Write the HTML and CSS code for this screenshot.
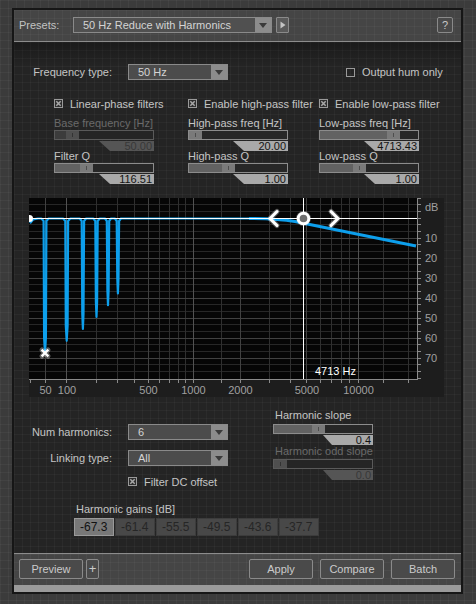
FILE: index.html
```html
<!DOCTYPE html>
<html>
<head>
<meta charset="utf-8">
<link rel="stylesheet" href="styles.css">
</head>
<body>
<div class="panel">
  <div class="presets-bar">
    <span class="presets-lbl">Presets:</span>
    <div class="dd preset-dd"><span class="dd-text">50 Hz Reduce with Harmonics</span><span class="dd-btn"><svg width="8" height="5" viewBox="0 0 8 5"><path d="M0 0H8L4 5Z" fill="#3a3a3a"/></svg></span></div>
    <div class="play-btn"><svg width="6" height="8" viewBox="0 0 6 8"><path d="M0.5 0.5L5.5 4L0.5 7.5Z" fill="#c4c4c4"/></svg></div>
    <div class="help-btn">?</div>
  </div>

  <div class="main">
    <div class="freq-row">
      <span class="row-lbl">Frequency type:</span>
      <div class="dd w100"><span class="dd-text">50 Hz</span><span class="dd-btn"><svg width="8" height="5" viewBox="0 0 8 5"><path d="M0 0H8L4 5Z" fill="#3a3a3a"/></svg></span></div>
      <div class="check hum"><svg class="cb" width="9" height="9" viewBox="0 0 9 9"><rect x="0.5" y="0.5" width="8" height="8" fill="none" stroke="#9a9a9a"/></svg>Output hum only</div>
    </div>

    <div class="filters">
      <div class="fcol">
        <div class="check"><svg class="cb" width="9" height="9" viewBox="0 0 9 9"><rect x="0.5" y="0.5" width="8" height="8" fill="#2e2e2e" stroke="#9a9a9a"/><path d="M2.3 2.3L6.7 6.7M6.7 2.3L2.3 6.7" stroke="#a8a8a8" stroke-width="1.5"/></svg>Linear-phase filters</div>
        <div class="slabel disabled">Base frequency [Hz]</div>
        <div class="slider disabled"><span class="fill" style="width:11px"></span><span class="thumb"></span></div>
        <div class="value disabled">50.00</div>
        <div class="slabel s2">Filter Q</div>
        <div class="slider"><span class="fill" style="width:25px"></span><span class="thumb"></span></div>
        <div class="value">116.51</div>
      </div>
      <div class="fcol">
        <div class="check"><svg class="cb" width="9" height="9" viewBox="0 0 9 9"><rect x="0.5" y="0.5" width="8" height="8" fill="#2e2e2e" stroke="#9a9a9a"/><path d="M2.3 2.3L6.7 6.7M6.7 2.3L2.3 6.7" stroke="#a8a8a8" stroke-width="1.5"/></svg>Enable high-pass filter</div>
        <div class="slabel">High-pass freq [Hz]</div>
        <div class="slider"><span class="fill" style="width:0px"></span><span class="thumb"></span></div>
        <div class="value">20.00</div>
        <div class="slabel s2">High-pass Q</div>
        <div class="slider"><span class="fill" style="width:33px"></span><span class="thumb"></span></div>
        <div class="value">1.00</div>
      </div>
      <div class="fcol">
        <div class="check"><svg class="cb" width="9" height="9" viewBox="0 0 9 9"><rect x="0.5" y="0.5" width="8" height="8" fill="#2e2e2e" stroke="#9a9a9a"/><path d="M2.3 2.3L6.7 6.7M6.7 2.3L2.3 6.7" stroke="#a8a8a8" stroke-width="1.5"/></svg>Enable low-pass filter</div>
        <div class="slabel">Low-pass freq [Hz]</div>
        <div class="slider"><span class="fill" style="width:67px"></span><span class="thumb"></span></div>
        <div class="value">4713.43</div>
        <div class="slabel s2">Low-pass Q</div>
        <div class="slider"><span class="fill" style="width:33px"></span><span class="thumb"></span></div>
        <div class="value">1.00</div>
      </div>
    </div>

    <div class="graph">
      <svg width="415" height="199" viewBox="0 0 415 199" font-family="Liberation Sans, Arial, sans-serif" font-size="11">
        <rect x="0" y="0" width="415" height="199" fill="#1d1d1d"/>
        <rect x="0" y="0" width="388" height="181" fill="#060606"/>
        <g fill="#272727">
          <rect x="0" y="6" width="388" height="1"/><rect x="0" y="13" width="388" height="1"/>
          <rect x="0" y="26" width="388" height="1"/><rect x="0" y="33" width="388" height="1"/>
          <rect x="0" y="46" width="388" height="1"/><rect x="0" y="53" width="388" height="1"/>
          <rect x="0" y="66" width="388" height="1"/><rect x="0" y="73" width="388" height="1"/>
          <rect x="0" y="86" width="388" height="1"/><rect x="0" y="93" width="388" height="1"/>
          <rect x="0" y="106" width="388" height="1"/><rect x="0" y="113" width="388" height="1"/>
          <rect x="0" y="126" width="388" height="1"/><rect x="0" y="133" width="388" height="1"/>
          <rect x="0" y="146" width="388" height="1"/><rect x="0" y="153" width="388" height="1"/>
          <rect x="0" y="166" width="388" height="1"/><rect x="0" y="173" width="388" height="1"/>
        </g>
        <g fill="#2f2f2f">
          <rect x="67" y="0" width="1" height="181"/><rect x="88" y="0" width="1" height="181"/>
          <rect x="105" y="0" width="1" height="181"/><rect x="130" y="0" width="1" height="181"/>
          <rect x="140" y="0" width="1" height="181"/><rect x="149" y="0" width="1" height="181"/>
          <rect x="156" y="0" width="1" height="181"/><rect x="192" y="0" width="1" height="181"/>
          <rect x="240" y="0" width="1" height="181"/><rect x="261" y="0" width="1" height="181"/>
          <rect x="291" y="0" width="1" height="181"/><rect x="302" y="0" width="1" height="181"/>
          <rect x="312" y="0" width="1" height="181"/><rect x="320" y="0" width="1" height="181"/>
          <rect x="354" y="0" width="1" height="181"/><rect x="379" y="0" width="1" height="181"/>
        </g>
        <g fill="#414141">
          <rect x="0" y="40" width="388" height="1"/><rect x="0" y="60" width="388" height="1"/>
          <rect x="0" y="80" width="388" height="1"/><rect x="0" y="100" width="388" height="1"/>
          <rect x="0" y="120" width="388" height="1"/><rect x="0" y="140" width="388" height="1"/>
          <rect x="0" y="160" width="388" height="1"/>
          <rect x="16" y="0" width="1" height="181"/><rect x="119" y="0" width="1" height="181"/>
          <rect x="211" y="0" width="1" height="181"/><rect x="277" y="0" width="1" height="181"/>
        </g>
        <g fill="#525252">
          <rect x="37" y="0" width="1" height="181"/><rect x="164" y="0" width="1" height="181"/>
          <rect x="329" y="0" width="1" height="181"/>
        </g>
        <!-- axes -->
        <g fill="#8a8a8a">
          <rect x="0" y="181" width="389" height="1"/>
          <rect x="388" y="0" width="1" height="182"/>
        </g>
        <g stroke="#8a8a8a" stroke-width="1">
          <path d="M1.5 181V185M16.5 181V185M37.5 181V185M67.5 181V185M88.5 181V185M105.5 181V185M119.5 181V185M130.5 181V185M140.5 181V185M149.5 181V185M156.5 181V185M164.5 181V185M192.5 181V185M211.5 181V185M240.5 181V185M261.5 181V185M277.5 181V185M291.5 181V185M302.5 181V185M312.5 181V185M320.5 181V185M329.5 181V185M354.5 181V185M379.5 181V185"/>
          <path d="M388 0.5H392M388 6.5H392M388 13.5H392M388 20.5H392M388 26.5H392M388 33.5H392M388 40.5H392M388 46.5H392M388 53.5H392M388 60.5H392M388 66.5H392M388 73.5H392M388 80.5H392M388 86.5H392M388 93.5H392M388 100.5H392M388 106.5H392M388 113.5H392M388 120.5H392M388 126.5H392M388 133.5H392M388 140.5H392M388 146.5H392M388 153.5H392M388 160.5H392M388 166.5H392M388 173.5H392M388 180.5H392"/>
        </g>
        <g fill="#a0a0a0">
          <text x="396" y="13">dB</text>
          <text x="396" y="44">10</text>
          <text x="396" y="64">20</text>
          <text x="396" y="84">30</text>
          <text x="396" y="104">40</text>
          <text x="396" y="124">50</text>
          <text x="396" y="144">60</text>
          <text x="396" y="164">70</text>
        </g>
        <g fill="#a0a0a0" text-anchor="middle">
          <text x="16.5" y="196">50</text>
          <text x="38" y="196">100</text>
          <text x="119.5" y="196">500</text>
          <text x="164.5" y="196">1000</text>
          <text x="211.5" y="196">2000</text>
          <text x="278" y="196">5000</text>
          <text x="329.5" y="196">10000</text>
        </g>
        <!-- response curve -->
        <path fill="none" stroke="#0d9fec" stroke-width="2.2" stroke-linejoin="round"
          d="M1 25.3L4.3 21.3L9 20.5L12.4 20.5L14.6 23L15.1 139.6L16 154.6L16.9 139.6L17.4 23L19.6 20.5
             L34.1 20.5L36.3 23L36.8 127.8L37.7 142.8L38.6 127.8L39.1 23L41.3 20.5
             L50.7 20.5L52.7 23L53.3 116L53.9 131L54.5 116L55.1 23L57.1 20.5
             L64.3 20.5L66.3 23L66.9 104L67.5 119L68.1 104L68.7 23L70.7 20.5
             L76 20.5L77.8 23L78.4 92.2L79 107.2L79.6 92.2L80.2 23L82 20.5
             L85.9 20.5L87.7 23L88.3 80.4L88.9 95.4L89.5 80.4L90.1 23L91.9 20.5
             L221 20.5"/>
        <path fill="none" stroke="#0d9fec" stroke-width="3" stroke-linejoin="round"
          d="M220 20.5L221 20.5C239 20.7 251 21.2 266 23.5L387 48"/>
        <!-- crosshair -->
        <rect x="0" y="20" width="388" height="1" fill="#ffffff"/>
        <rect x="274" y="0" width="1" height="181" fill="#ffffff"/>
        <!-- handles -->
        <g stroke="rgba(255,255,255,0.35)" stroke-width="5" fill="none" stroke-linecap="round" stroke-linejoin="round">
          <path d="M248 13.5L241 20.5L248 27.5"/>
          <path d="M302 13.5L309 20.5L302 27.5"/>
          <path d="M13 152L19 158M19 152L13 158"/>
        </g>
        <g stroke="#ffffff" stroke-width="3" fill="none" stroke-linecap="round" stroke-linejoin="round">
          <path d="M248 13.5L241 20.5L248 27.5"/>
          <path d="M302 13.5L309 20.5L302 27.5"/>
        </g>
        <path d="M13.5 152.5L18.5 157.5M18.5 152.5L13.5 157.5" stroke="#ffffff" stroke-width="2.4" stroke-linecap="square"/>
        <circle cx="274.5" cy="20.5" r="7.5" fill="rgba(255,255,255,0.3)"/>
        <circle cx="274.5" cy="20.5" r="5.3" fill="#6e6e6e" stroke="#ffffff" stroke-width="3"/>
        <circle cx="0.5" cy="20.5" r="3.5" fill="#ffffff"/>
        <text x="286" y="177" fill="#ffffff">4713 Hz</text>
      </svg>
    </div>

    <div class="harm">
      <div class="harm-left">
        <div class="form-row">
          <span class="row-lbl">Num harmonics:</span>
          <div class="dd w100"><span class="dd-text">6</span><span class="dd-btn"><svg width="8" height="5" viewBox="0 0 8 5"><path d="M0 0H8L4 5Z" fill="#3a3a3a"/></svg></span></div>
        </div>
        <div class="form-row r2">
          <span class="row-lbl">Linking type:</span>
          <div class="dd w100"><span class="dd-text">All</span><span class="dd-btn"><svg width="8" height="5" viewBox="0 0 8 5"><path d="M0 0H8L4 5Z" fill="#3a3a3a"/></svg></span></div>
        </div>
        <div class="check dc"><svg class="cb" width="9" height="9" viewBox="0 0 9 9"><rect x="0.5" y="0.5" width="8" height="8" fill="#2e2e2e" stroke="#9a9a9a"/><path d="M2.3 2.3L6.7 6.7M6.7 2.3L2.3 6.7" stroke="#a8a8a8" stroke-width="1.5"/></svg>Filter DC offset</div>
      </div>
      <div class="harm-right">
        <div class="slabel">Harmonic slope</div>
        <div class="slider hs"><span class="fill" style="width:38px"></span><span class="thumb"></span></div>
        <div class="value v50">0.4</div>
        <div class="slabel disabled">Harmonic odd slope</div>
        <div class="slider disabled hs2"><span class="fill" style="width:0px"></span><span class="thumb"></span></div>
        <div class="value v50 disabled">0.0</div>
      </div>
    </div>

    <div class="gains-lbl">Harmonic gains [dB]</div>
    <div class="gains">
      <div class="gain active">-67.3</div>
      <div class="gain">-61.4</div>
      <div class="gain">-55.5</div>
      <div class="gain">-49.5</div>
      <div class="gain">-43.6</div>
      <div class="gain">-37.7</div>
    </div>
  </div>

  <div class="bottom-bar">
    <div class="btn w64">Preview</div>
    <div class="btn plus">+</div>
    <div class="btn w64 push">Apply</div>
    <div class="btn w64">Compare</div>
    <div class="btn w64">Batch</div>
  </div>
  <div class="strip"></div>
</div>
</body>
</html>
```
FILE: styles.css
```css
* { box-sizing: border-box; }
html, body { margin: 0; padding: 0; }
body {
  width: 476px;
  height: 604px;
  overflow: hidden;
  background-color: #3b3b3b;
  background-image:
    linear-gradient(rgba(255,255,255,0.035) 1px, transparent 1px),
    linear-gradient(90deg, rgba(255,255,255,0.035) 1px, transparent 1px);
  background-size: 8px 8px;
  font-family: "Liberation Sans", Arial, sans-serif;
  font-size: 11px;
  color: #c4c4c4;
}
.panel {
  margin: 8px 0 0 12px;
  width: 451px;
  height: 586px;
  border: 2px solid #161616;
  display: flex;
  flex-direction: column;
}
.presets-bar {
  height: 32px;
  flex: none;
  border-bottom: 1px solid #8c8c8c;
  background-color: #454545;
  background-image:
    linear-gradient(rgba(255,255,255,0.03) 1px, transparent 1px),
    linear-gradient(90deg, rgba(255,255,255,0.03) 1px, transparent 1px);
  background-size: 8px 8px;
  display: flex;
  align-items: flex-start;
  padding: 7px 8px 0 5px;
}
.presets-lbl { width: 54px; line-height: 16px; color: #c2c2c2; }
.dd {
  display: flex;
  align-items: center;
  height: 16px;
  border: 1px solid #8a8a8a;
  background: #4c4c4c;
}
.dd-text { flex: 1; padding-left: 9px; line-height: 14px; color: #d4d4d4; white-space: nowrap; }
.dd-btn {
  width: 16px;
  height: 14px;
  background: #8c8c8c;
  display: flex;
  align-items: center;
  justify-content: center;
}
.dd-btn svg { display: block; }
.preset-dd { width: 199px; background: #505050; }
.w100 { width: 100px; }
.play-btn {
  margin-left: 4px;
  width: 13px;
  height: 16px;
  border: 1px solid #8a8a8a;
  border-radius: 1px;
  background: #5a5a5a;
  display: flex;
  align-items: center;
  justify-content: center;
}
.play-btn svg { display: block; }
.help-btn {
  margin-left: auto;
  width: 16px;
  height: 16px;
  border: 1px solid #8a8a8a;
  border-radius: 2px;
  background: #4a4a4a;
  text-align: center;
  line-height: 14px;
  color: #c8c8c8;
}
.main {
  height: 511px;
  flex: none;
  background-color: #242424;
  background-image:
    linear-gradient(rgba(0,0,0,0.28), rgba(0,0,0,0) 24px),
    linear-gradient(rgba(255,255,255,0.03) 1px, transparent 1px),
    linear-gradient(90deg, rgba(255,255,255,0.03) 1px, transparent 1px);
  background-size: 100% 100%, 8px 8px, 8px 8px;
  padding-top: 22px;
}
.freq-row { display: flex; align-items: center; height: 16px; }
.row-lbl { width: 98px; margin-right: 16px; text-align: right; color: #c4c4c4; white-space: nowrap; }
.check { display: flex; align-items: center; height: 13px; white-space: nowrap; color: #c4c4c4; }
.cb { display: block; margin-right: 7px; flex: none; }
.hum { margin-left: 118px; }
.filters {
  display: grid;
  grid-template-columns: 134px 131px 100px;
  padding-left: 40px;
  margin-top: 17px;
}
.fcol { display: flex; flex-direction: column; }
.slabel { margin-top: 7px; height: 13px; line-height: 13px; white-space: nowrap; color: #c4c4c4; }
.slabel.s2 { margin-top: 0; height: 12px; line-height: 11px; }
.slabel.disabled { color: #6a6a6a; }
.slider {
  width: 100px;
  height: 10px;
  border: 1px solid #8c8c8c;
  background: #272727;
  display: flex;
}
.slider .fill { background: #626262; height: 100%; }
.slider .thumb {
  width: 13px;
  height: 100%;
  background: #7a7a7a;
  position: relative;
}
.slider .thumb::after {
  content: "";
  position: absolute;
  left: 6px;
  top: 2px;
  width: 1px;
  height: 4px;
  background: #4e4e4e;
}
.slider.disabled { border-color: #5a5a5a; background: #252525; }
.slider.disabled .fill { background: #3c3c3c; }
.slider.disabled .thumb { background: #4f4f4f; }
.slider.disabled .thumb::after { background: #333; }
.value {
  margin-top: 1px;
  margin-left: 45px;
  width: 55px;
  height: 10px;
  line-height: 10px;
  text-align: right;
  padding-right: 2px;
  background: #a9a9a9;
  color: #141414;
  clip-path: polygon(0 0, 100% 0, 100% 100%, 11px 100%);
}
.value.disabled { background: #555555; color: #383838; }
.value.v50 { width: 50px; margin-left: 50px; clip-path: polygon(0 0, 100% 0, 100% 100%, 9px 100%); }
.graph { margin: 14px 0 0 15px; height: 199px; }
.graph svg { display: block; }
.harm { display: flex; margin-top: 12px; }
.harm-left { width: 259px; padding-top: 15px; }
.form-row { display: flex; align-items: center; height: 16px; }
.form-row.r2 { margin-top: 10px; }
.check.dc { margin-top: 9px; padding-left: 114px; }
.harm-right { display: flex; flex-direction: column; width: 100px; }
.harm-right .slabel { margin-top: 0; height: 13px; line-height: 13px; padding-left: 2px; }
.slider.hs { margin-top: 2px; }
.slider.hs2 { margin-top: 1px; }
.gains-lbl { margin: 15px 0 0 62px; height: 13px; line-height: 13px; color: #c4c4c4; }
.gains { display: flex; gap: 1px; margin: 2px 0 0 60px; }
.gain {
  width: 40px;
  height: 18px;
  line-height: 16px;
  padding-left: 5px;
  border: 1px solid #3c3c3c;
  background: #484848;
  color: #262626;
  font-size: 12px;
}
.gain.active { background: #787878; border-color: #9a9a9a; color: #121212; }
.bottom-bar {
  flex: none;
  height: 32px;
  border-top: 1px solid #8c8c8c;
  background-color: #454545;
  background-image:
    linear-gradient(rgba(255,255,255,0.03) 1px, transparent 1px),
    linear-gradient(90deg, rgba(255,255,255,0.03) 1px, transparent 1px);
  background-size: 8px 8px;
  display: flex;
  align-items: flex-start;
  padding: 5px 6px 0 5px;
}
.btn {
  height: 20px;
  border: 1px solid #8a8a8a;
  border-radius: 2px;
  background: #4a4a4a;
  color: #cacaca;
  text-align: center;
  line-height: 18px;
  margin-left: 7px;
}
.btn:first-child { margin-left: 0; }
.w64 { width: 64px; }
.btn.plus { width: 13px; margin-left: 3px; font-size: 13px; }
.btn.push { margin-left: auto; }
.strip { flex: none; height: 7px; background: #9a9a9a; }
```
